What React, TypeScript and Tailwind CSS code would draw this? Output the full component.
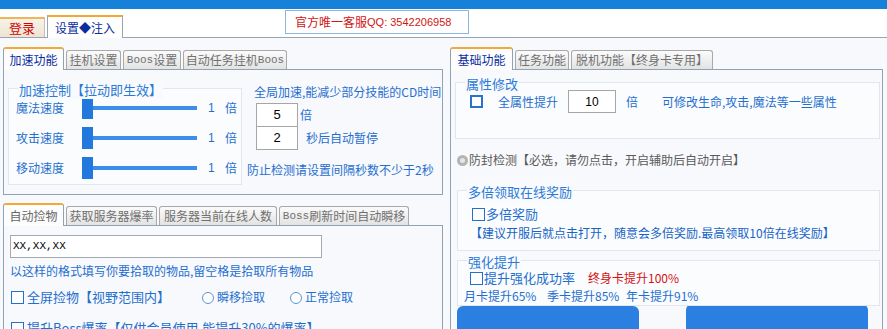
import React from 'react'

const FONT = "font-['Noto_Sans_CJK_SC','Microsoft_YaHei',sans-serif]"
const NUM = "font-['Liberation_Sans',sans-serif]"

interface TabProps {
  active?: boolean
  className?: string
  children: React.ReactNode
}

const Tab: React.FC<TabProps> = ({ active, className = '', children }) =>
  active ? (
    <div
      className={`relative z-10 -mb-px flex h-[23px] items-center justify-center rounded-t-[3px] border-x border-t-2 border-x-[#8fa3b5] border-t-[#f2a936] bg-[#fdfdfe] text-[12px] whitespace-nowrap ${className}`}
    >
      {children}
    </div>
  ) : (
    <div
      className={`ml-[2px] flex h-[19px] items-center justify-center rounded-t-[3px] border border-b-0 border-[#a9a9a9] bg-linear-to-b from-[#fbfbfb] to-[#e3e3e3] text-[12px] whitespace-nowrap text-[#707070] ${className}`}
    >
      {children}
    </div>
  )

const Boos: React.FC<{ text: string }> = ({ text }) => (
  <span className="font-['Liberation_Mono',monospace] text-[11px]">{text}</span>
)

interface GroupProps {
  label: string
  className?: string
  children: React.ReactNode
}

const GroupBox: React.FC<GroupProps> = ({ label, className = '', children }) => (
  <div className={`relative border border-[#e2e7ee] bg-[#fbfcfe] ${className}`}>
    <span className="absolute top-[-8px] left-[9px] bg-[#f9fafd] px-px text-[13px] leading-[18px] whitespace-nowrap text-[#2b7ad6]">
      {label}
    </span>
    {children}
  </div>
)

const CheckBox: React.FC<{ thick?: boolean }> = ({ thick }) => (
  <span
    className={`inline-block h-[13px] w-[13px] shrink-0 bg-white ${thick ? 'border-2 border-[#2a73cc]' : 'border-[1.5px] border-[#2670c9]'}`}
  />
)

const Radio = () => (
  <span className="inline-block h-[12px] w-[12px] shrink-0 rounded-full border border-[#5b95d6] bg-white" />
)

const SPEEDS = ['魔法速度', '攻击速度', '移动速度']

export default function App() {
  return (
    <div className={`h-[329px] w-[887px] overflow-hidden bg-[#f8f9fc] ${FONT}`}>
      {/* 顶部蓝条 */}
      <div className="h-[9px] bg-[#1581d9]" />

      {/* 顶部标签 */}
      <div className="flex h-[29px] items-end border-b border-[#97a5b1] bg-white">
        <div className="flex h-[20px] w-[45px] items-center justify-center border-t-2 border-r border-t-[#f0b45a] border-r-[#c0c0c0] bg-linear-to-b from-[#f8f2e8] to-[#eee4d3] text-[13px] text-[#d40000]">
          登录
        </div>
        <div className="relative z-10 -mb-px ml-[2px] flex h-[23px] w-[76px] items-center justify-center border-x border-t-2 border-x-[#97a5b1] border-t-[#f0a830] bg-white text-[12px] text-[#0b2d9e]">
          设置◆注入
        </div>
        <div className="mt-px ml-[162px] flex h-[24px] w-[184px] items-center self-start border border-[#8cb6e2] pl-[9px] text-[12px] text-[#d21414]">
          官方唯一客服<span className={`${NUM} text-[11px]`}>QQ: 3542206958</span>
        </div>
      </div>

      <div className="flex pt-[9px] pl-[3px]">
        {/* 左侧 */}
        <div className="w-[440px]">
          <div className="flex h-[22px] items-end">
            <Tab active className="w-[61px] text-[#0b2d9e]">加速功能</Tab>
            <Tab className="w-[55px]">挂机设置</Tab>
            <Tab className="w-[58px]">
              <Boos text="Boos" />设置
            </Tab>
            <Tab className="w-[104px]">
              自动任务挂机<Boos text="Boos" />
            </Tab>
          </div>
          <div className="flex h-[126px] border border-[#8fa3b5]">
            <GroupBox label="加速控制【拉动即生效】" className="mt-[18px] ml-[4px] h-[97px] w-[234px] pt-[4px] pl-[7px]">
              {SPEEDS.map((name) => (
                <div key={name} className="flex h-[30px] items-center text-[12px] text-[#1f6fcf]">
                  <span className="w-[66px]">{name}</span>
                  <span className="h-[22px] w-[11px] bg-[#2378de]" />
                  <span className="h-[4px] w-[104px] bg-[#3b8fe8]" />
                  <span className={`ml-[11px] w-[7px] ${NUM}`}>1</span>
                  <span className="ml-[10px]">倍</span>
                </div>
              ))}
            </GroupBox>
            <div className="ml-[5px] flex flex-col text-[12px] text-[#1f6fcf]">
              <div className="mt-[13px] pl-[7px] leading-[18px] whitespace-nowrap">全局加速,能减少部分技能的CD时间</div>
              <div className="mt-[2px] ml-[9px] flex items-center">
                <div className={`flex h-[24px] w-[42px] items-center justify-center border border-[#a6a6a6] bg-white text-[13px] text-black ${NUM}`}>5</div>
                <span className="ml-[2px]">倍</span>
              </div>
              <div className="-mt-px ml-[9px] flex items-center">
                <div className={`flex h-[24px] w-[42px] items-center justify-center border border-[#a6a6a6] bg-white text-[13px] text-black ${NUM}`}>2</div>
                <span className="ml-[8px]">秒后自动暂停</span>
              </div>
              <div className="mt-[11px] leading-[18px] whitespace-nowrap">防止检测请设置间隔秒数不少于2秒</div>
            </div>
          </div>

          <div className="mt-[8px] flex h-[22px] items-end">
            <Tab active className="w-[61px] text-[#666]">自动捡物</Tab>
            <Tab className="w-[91px]">获取服务器爆率</Tab>
            <Tab className="w-[118px]">服务器当前在线人数</Tab>
            <Tab className="w-[130px]">
              <Boos text="Boss" />刷新时间自动瞬移
            </Tab>
          </div>
          <div className="h-[110px] border border-[#8fa3b5] pt-[9px] pl-[6px] text-[#1f6fcf]">
            <div className="flex h-[23px] w-[312px] items-center border border-[#a3aab2] bg-white pl-[2px] font-['Liberation_Mono',monospace] text-[11px] text-black">
              XX,XX,XX
            </div>
            <div className="mt-[4px] text-[12px] leading-[18px] whitespace-nowrap">以这样的格式填写你要拾取的物品,留空格是拾取所有物品</div>
            <div className="mt-[8px] flex h-[18px] items-center whitespace-nowrap">
              <span className="ml-px"><CheckBox /></span>
              <span className="ml-[3px] text-[13px]">全屏捡物【视野范围内】</span>
              <span className="ml-[32px]"><Radio /></span>
              <span className="ml-[3px] text-[12px]">瞬移捡取</span>
              <span className="ml-[25px]"><Radio /></span>
              <span className="ml-[3px] text-[12px]">正常捡取</span>
            </div>
            <div className="mt-[13px] flex h-[18px] items-center whitespace-nowrap">
              <span className="ml-px"><CheckBox /></span>
              <span className="ml-[3px] text-[13px]">提升Boss爆率【仅供会员使用,能提升30%的爆率】</span>
            </div>
          </div>
        </div>

        {/* 右侧 */}
        <div className="ml-[7px] w-[433px]">
          <div className="flex h-[22px] items-end">
            <Tab active className="w-[63px] text-[#0b2d9e]">基础功能</Tab>
            <Tab className="w-[54px]">任务功能</Tab>
            <Tab className="w-[142px]">脱机功能【终身卡专用】</Tab>
          </div>
          <div className="h-[300px] border border-[#8fa3b5] pt-[12px] pl-[4px] text-[12px] text-[#1f6fcf]">
            <GroupBox label="属性修改" className="h-[57px] w-[425px] pt-[7px] pl-[14px]">
              <div className="flex h-[23px] items-center whitespace-nowrap">
                <CheckBox thick />
                <span className="ml-[15px]">全属性提升</span>
                <div className={`ml-[10px] flex h-[23px] w-[48px] items-center justify-center border border-[#a6a6a6] bg-white text-[12px] text-black ${NUM}`}>10</div>
                <span className="ml-[10px]">倍</span>
                <span className="ml-[24px]">可修改生命,攻击,魔法等一些属性</span>
              </div>
            </GroupBox>

            <div className="mt-[12px] flex h-[18px] items-center pl-[2px] whitespace-nowrap text-[#5a5a5a]">
              <span className="flex h-[11px] w-[11px] items-center justify-center rounded-full bg-[#b4b4b4]">
                <span className="h-[5px] w-[5px] rounded-full bg-[#e6e6e6]" />
              </span>
              <span className="ml-px">防封检测【必选，请勿点击，开启辅助后自动开启】</span>
            </div>

            <GroupBox label="多倍领取在线奖励" className="mt-[21px] ml-[2px] h-[61px] w-[423px] pt-[14px]">
              <div className="flex h-[18px] items-center pl-[14px]">
                <CheckBox />
                <span className="ml-px text-[13px]">多倍奖励</span>
              </div>
              <div className="mt-px pl-[12px] leading-[18px] whitespace-nowrap text-[#1764c6]">
                【建议开服后就点击打开，随意会多倍奖励.最高领取10倍在线奖励】
              </div>
            </GroupBox>

            <GroupBox label="强化提升" className="mt-[9px] ml-[2px] h-[46px] w-[423px] pt-[8px]">
              <div className="flex h-[18px] items-center pl-[12px] whitespace-nowrap">
                <CheckBox />
                <span className="ml-px text-[13px]">提升强化成功率</span>
                <span className="ml-[13px] text-[#d41212]">终身卡提升100%</span>
              </div>
              <div className="flex h-[18px] items-center pl-[6px] whitespace-nowrap">
                <span className="w-[83px]">月卡提升65%</span>
                <span className="w-[79px]">季卡提升85%</span>
                <span>年卡提升91%</span>
              </div>
            </GroupBox>

            <div className="flex gap-[47px] pl-[2px]">
              <button className="h-[40px] w-[182px] rounded-t-[6px] bg-[#2a7fe0]" />
              <button className="-mt-[2px] h-[42px] w-[182px] rounded-t-[6px] bg-[#2a7fe0]" />
            </div>
          </div>
        </div>
      </div>
    </div>
  )
}
